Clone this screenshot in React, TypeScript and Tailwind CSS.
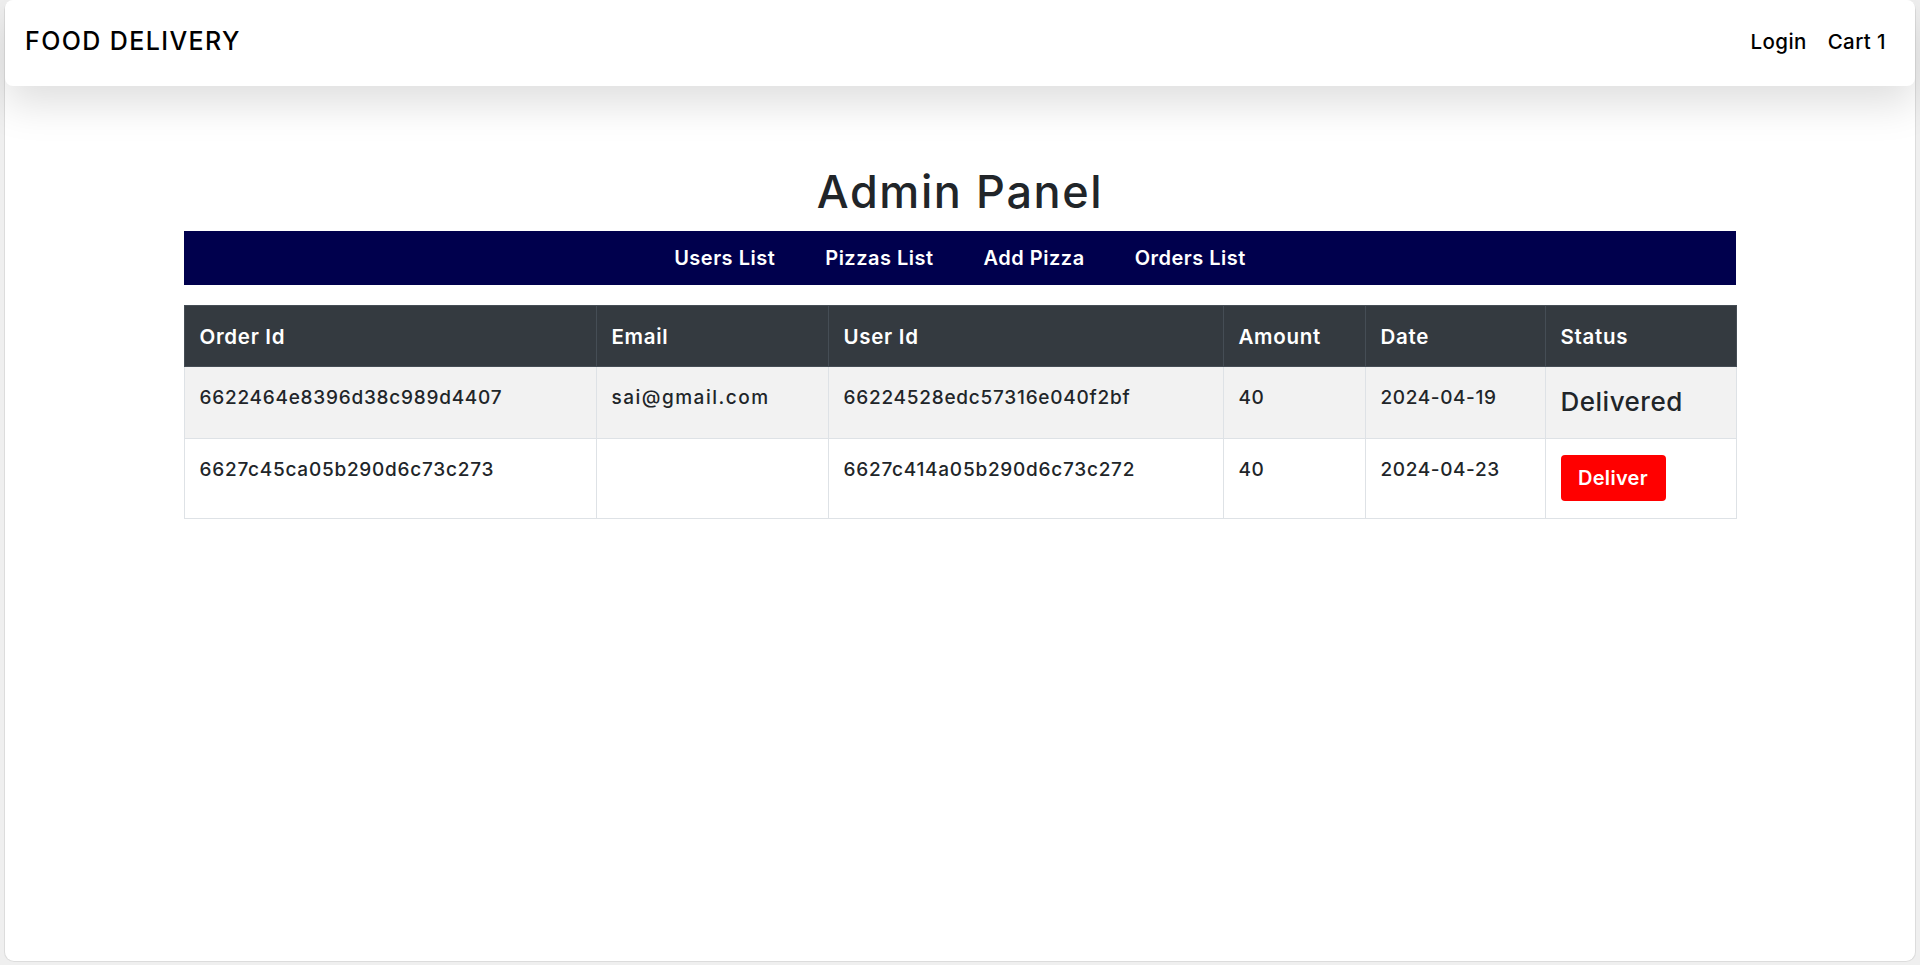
import React from "react";

const orders = [
  {
    id: "6622464e8396d38c989d4407",
    email: "sai@gmail.com",
    user: "66224528edc57316e040f2bf",
    amount: "40",
    date: "2024-04-19",
    delivered: true,
  },
  {
    id: "6627c45ca05b290d6c73c273",
    email: "",
    user: "6627c414a05b290d6c73c272",
    amount: "40",
    date: "2024-04-23",
    delivered: false,
  },
];

const td =
  "border border-[#dee2e6] px-[15px] pt-[17px] pb-[17px] align-top font-medium leading-[27px]";

export default function App() {
  return (
    <div
      className="min-h-[965px] bg-[#efefef] px-[4px] pb-[3px]"
      style={{ fontFamily: "Inter, 'Open Sans', sans-serif" }}
    >
      <div className="h-[962px] rounded-[10px] border border-[#dcdcdc] border-t-0 bg-white">
        <nav className="flex h-[86px] items-center justify-between rounded-[8px] bg-white pl-[20px] pr-[29px] pb-[2px] shadow-[0_18px_40px_rgba(0,0,0,0.13)]">
          <div className="text-[25px] font-medium tracking-[1.4px] text-black">
            FOOD DELIVERY
          </div>
          <div className="flex gap-[21px] text-[20.5px] font-medium tracking-[0.4px] text-black">
            <span>Login</span>
            <span>Cart 1</span>
          </div>
        </nav>
        <main className="flex flex-col items-center pt-[81px]">
          <h1 className="text-[45px] font-medium leading-[50px] text-[#212529] tracking-[1.6px]">
            Admin Panel
          </h1>
          <div className="mt-[14px] flex h-[54px] w-[1552px] items-center justify-center gap-[50px] bg-[#00004d] text-[20px] font-semibold tracking-[0.5px] text-white">
            <span>Users List</span>
            <span>Pizzas List</span>
            <span>Add Pizza</span>
            <span>Orders List</span>
          </div>
          <table className="mt-[20px] w-[1552px] table-fixed border-collapse text-left text-[19px] text-[#212529]">
            <colgroup>
              <col className="w-[412px]" />
              <col className="w-[232px]" />
              <col className="w-[395px]" />
              <col className="w-[142px]" />
              <col className="w-[180px]" />
              <col className="w-[191px]" />
            </colgroup>
            <thead>
              <tr className="bg-[#343a40] text-white">
                {["Order Id", "Email", "User Id", "Amount", "Date", "Status"].map((h) => (
                  <th
                    key={h}
                    className="h-[61px] border border-[#454d55] px-[15px] align-middle text-[20.5px] font-semibold leading-[27px] tracking-[0.7px]"
                  >
                    {h}
                  </th>
                ))}
              </tr>
            </thead>
            <tbody>
              {orders.map((o, i) => (
                <tr key={o.id} className={i === 0 ? "bg-[#f2f2f2]" : "bg-white"}>
                  <td className={`${td} tracking-[0.75px]`}>{o.id}</td>
                  <td className={`${td} tracking-[1.5px]`}>{o.email}</td>
                  <td className={`${td} tracking-[0.75px]`}>{o.user}</td>
                  <td className={`${td} tracking-[0.5px]`}>{o.amount}</td>
                  <td className={`${td} tracking-[0.6px]`}>{o.date}</td>
                  <td className="border border-[#dee2e6] px-[15px] pt-[16px] pb-[17px] align-top">
                    {o.delivered ? (
                      <span className="block text-[26px] font-medium leading-[38px] tracking-[0.5px]">
                        Delivered
                      </span>
                    ) : (
                      <button className="flex h-[46px] w-[105px] items-center justify-center rounded-[4px] bg-[#ff0000] text-[20px] font-semibold tracking-[0.3px] text-white">
                        Deliver
                      </button>
                    )}
                  </td>
                </tr>
              ))}
            </tbody>
          </table>
        </main>
      </div>
    </div>
  );
}
